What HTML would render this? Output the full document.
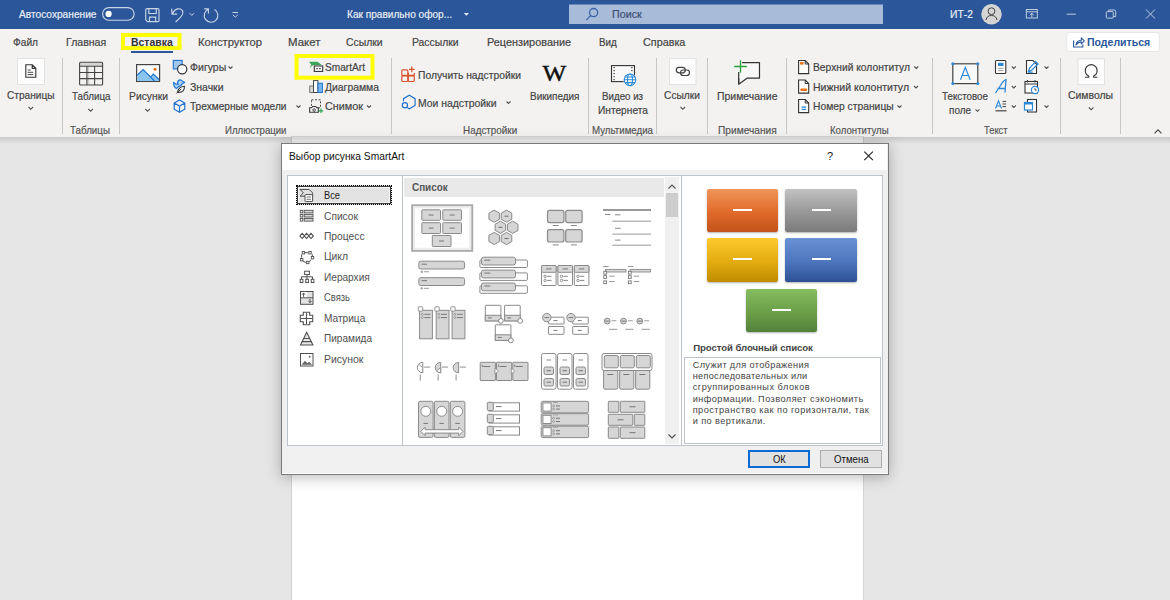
<!DOCTYPE html>
<html><head><meta charset="utf-8"><style>
html,body{margin:0;padding:0;width:1170px;height:600px;overflow:hidden;background:#e6e6e6;font-family:"Liberation Sans", sans-serif;}
.t{position:absolute;white-space:nowrap;line-height:1;transform-origin:0 0;}
.s{-webkit-text-stroke:0.2px currentColor;}
.a{position:absolute;}
svg{position:absolute;overflow:visible;}
</style></head><body>
<!-- title bar -->
<div class="a" style="left:0;top:0;width:1170px;height:29px;background:#2b579a"></div>
<!-- ribbon -->
<div class="a" style="left:0;top:29px;width:1170px;height:108px;background:#f3f2f1"></div>

<!-- page -->
<div class="a" style="left:292px;top:137px;width:571px;height:463px;background:#fff;box-shadow:0 0 0 1px #d4d4d4"></div>
<div class="a" style="left:0;top:137px;width:1170px;height:7px;background:linear-gradient(rgba(0,0,0,.13),rgba(0,0,0,0))"></div>
<!-- dialog -->
<div class="a" style="left:281px;top:143px;width:606px;height:330px;background:#f0f0f0;border:1px solid #7a7a7a;box-shadow:0 2px 14px rgba(0,0,0,.28),inset 0 -1px 0 #fff"></div>
<div class="a" style="left:282px;top:144px;width:605px;height:26px;background:#fff"></div>
<!-- left pane -->
<div class="a" style="left:287px;top:175px;width:114px;height:269px;background:#fff;border:1px solid #bcc3cc"></div>
<!-- gallery -->
<div class="a" style="left:403px;top:175px;width:278px;height:269px;background:#fff;border:1px solid #bcc3cc;border-left:none"></div>
<div class="a" style="left:404px;top:178px;width:260px;height:19px;background:#e9e9e9"></div>
<div class="a" style="left:665px;top:177px;width:14px;height:267px;background:#f0f0f0"></div>
<div class="a" style="left:666px;top:193px;width:12px;height:24px;background:#cdcdcd"></div>
<!-- preview pane -->
<div class="a" style="left:681px;top:175px;width:200px;height:269px;background:#fff;border:1px solid #bcc3cc"></div>
<div class="a" style="left:684px;top:357px;width:195px;height:85px;border:1px solid #bcc3cc"></div>
<!-- selected item -->
<div class="a" style="left:296px;top:185px;width:94px;height:18px;background:#e3e3e3;border:1px dotted #000;box-shadow:inset 0 0 0 1px #3a3a3a,inset 0 0 0 2px #f4f4f4"></div>
<!-- buttons -->
<div class="a" style="left:748px;top:450px;width:58px;height:14px;background:#e1e1e1;border:2px solid #0a6ad6"></div>
<div class="a" style="left:820px;top:450px;width:60px;height:16px;background:#e1e1e1;border:1px solid #adadad"></div>
<!-- preview boxes -->
<div class="a" style="left:707px;top:188.5px;width:71px;height:43px;border-radius:2px;background:linear-gradient(#f0955a,#e06a2a 55%,#c2531b);box-shadow:0 1px 2px rgba(0,0,0,.3)"></div>
<div class="a" style="left:785px;top:188.5px;width:72px;height:43px;border-radius:2px;background:linear-gradient(#c2c2c2,#979797 55%,#7b7b7b);box-shadow:0 1px 2px rgba(0,0,0,.3)"></div>
<div class="a" style="left:707px;top:238px;width:71px;height:44px;border-radius:2px;background:linear-gradient(#fdca2e,#e2ab10 55%,#bf8c00);box-shadow:0 1px 2px rgba(0,0,0,.3)"></div>
<div class="a" style="left:785px;top:238px;width:72px;height:44px;border-radius:2px;background:linear-gradient(#6a92d4,#4c75bd 55%,#2d5193);box-shadow:0 1px 2px rgba(0,0,0,.3)"></div>
<div class="a" style="left:746px;top:288.5px;width:71px;height:43px;border-radius:2px;background:linear-gradient(#86bd5f,#6b9e48 55%,#52813a);box-shadow:0 1px 2px rgba(0,0,0,.3)"></div>
<div class="a" style="left:733px;top:209px;width:19px;height:2px;background:#fff"></div>
<div class="a" style="left:812px;top:209px;width:19px;height:2px;background:#fff"></div>
<div class="a" style="left:733px;top:258px;width:19px;height:2px;background:#fff"></div>
<div class="a" style="left:812px;top:258px;width:19px;height:2px;background:#fff"></div>
<div class="a" style="left:772px;top:309px;width:19px;height:2px;background:#fff"></div>
<svg width="1170" height="600" style="left:0;top:0">
<g fill="none" stroke="#c9d4e6" stroke-width="1.15">
 <rect x="102.6" y="7.6" width="31.5" height="12.6" rx="6.3"/>
 <path d="M147.2 8.6h10.3q1.5 0 1.5 1.5v10.3q0 1.2-1.2 1.2h-10.3l-1.8-1.8v-9.7q0-1.5 1.5-1.5z M148.8 8.6v4.9h7.5v-4.9 M149.5 21.6v-4.5h6.2v4.5"/>
 <path d="M171.6 8.6l.5 5.5h5 M172.3 13.9C175 8 181 7.2 182.8 11.5C183.8 14 182 16.5 175.6 22"/>
 <path d="M189.6 13.2l2.2 2.2 2.2-2.2" stroke-width="1"/>
 <path d="M214.5 9.6A6.8 6.8 0 1 1 208.4 9.2 M204.3 8.8h4.1v4.6"/>
 <path d="M232.5 12.5h5.5 M232.8 14.8l2.5 2.3 2.5-2.3" stroke-width="1"/>
</g>
<circle cx="108.6" cy="13.9" r="3.1" fill="#fff"/>
<!-- search box -->
<rect x="569" y="4.5" width="314" height="19.5" fill="#a8bbd9"/>
<g fill="none" stroke="#3a64a6" stroke-width="1.3"><circle cx="593.6" cy="12.6" r="4.1"/><path d="M590.6 15.6l-4.3 4.5"/></g>
<!-- avatar -->
<circle cx="991.5" cy="14.2" r="10.2" fill="#d4d4d4"/>
<g fill="none" stroke="#444" stroke-width="1"><circle cx="991.5" cy="11.2" r="3.4"/><path d="M986 20a5.6 5.6 0 0 1 11 0"/></g>
<g fill="none" stroke="#c7d2e5" stroke-width="0.95">
 <rect x="1026.3" y="9.5" width="11" height="8.5"/><path d="M1026.3 11.8h11 M1031.8 17.8v-4.5 M1029.8 15.2l2-2 2 2"/>
 <path d="M1066.8 14.2h9"/>
 <rect x="1106.3" y="11.6" width="7" height="6.5" rx="1"/><path d="M1108.6 11.6v-1.6h5.5q1.6 0 1.6 1.6v5h-2.4"/>
 <path d="M1146 9.5l9 9 M1155 9.5l-9 9"/>
</g>
<!-- tab highlight -->
<rect x="123" y="35" width="56.5" height="13" fill="none" stroke="#ffff00" stroke-width="4"/>
<rect x="131" y="51" width="42" height="2" fill="#2b579a"/>
<!-- share button -->
<rect x="1066.8" y="32.5" width="92.5" height="19" rx="2" fill="#fff" stroke="#e6e6e6"/>
<g fill="none" stroke="#2b579a" stroke-width="1.1"><path d="M1073.6 40.5v6.5h9.2v-2.5"/><path d="M1076 45q0.5-4.5 5.3-4.8v-2.3l3 3-3 3v-2q-3 0-5.3 3z" stroke-linejoin="round"/></g>
<path d="M463.8 13l2.6 2.8 2.6-2.8z" fill="#e3e9f3"/>
<!-- separators -->
<g fill="#c8c6c4"><rect x="62" y="58" width="1" height="76"/><rect x="119" y="58" width="1" height="76"/><rect x="391" y="58" width="1" height="76"/><rect x="588" y="58" width="1" height="76"/><rect x="656" y="58" width="1" height="76"/><rect x="707" y="58" width="1" height="76"/><rect x="786" y="58" width="1" height="76"/><rect x="932" y="58" width="1" height="76"/><rect x="1060" y="58" width="1" height="76"/><rect x="1120" y="58" width="1" height="76"/></g>
<!-- Страницы -->
<rect x="17.5" y="58.5" width="27" height="26" fill="#fdfdfd" stroke="#e2e2e2"/>
<g fill="none" stroke="#333" stroke-width="1.1"><path d="M25.8 64.8h6.5l3.5 3.5v9h-10z M32.2 64.8v3.6h3.6"/><path d="M27.7 70h3 M27.7 72.3h5.5 M27.7 74.6h5.5" stroke-width="0.9"/></g>
<!-- Таблица -->
<rect x="80.2" y="62.9" width="21.8" height="3" fill="#d6d6d6"/><rect x="87.6" y="66.2" width="1.6" height="18.3" fill="#d0d0d0"/>
<g fill="none" stroke="#444" stroke-width="1.1"><rect x="79.6" y="62.3" width="23" height="22.7" rx="1"/><path d="M79.6 66.3h23 M79.6 72.5h23 M79.6 78.6h23 M86.9 66.3v18.7 M94.6 66.3v18.7"/></g>
<!-- Рисунки -->
<rect x="136.6" y="64.6" width="23" height="16.8" fill="#fdfdfd" stroke="#444" stroke-width="1.2"/>
<path d="M137.2 75.2L143.1 69.6 155 81H137.2z" fill="#8cc4f0"/>
<path d="M150.6 77L153.4 74 159 79.6V81H154.8z" fill="#8cc4f0"/>
<path d="M137.2 75.2L143.1 69.6 154.6 81 M150.6 76.9L153.4 74 159 79.5" fill="none" stroke="#1f78d1" stroke-width="1.2"/>
<circle cx="155" cy="69.2" r="1.5" fill="#e8731a"/>
<!-- Фигуры -->
<rect x="173.3" y="60.4" width="8.8" height="8.5" fill="#9fc7f0" stroke="#1f73d0" stroke-width="1.1"/>
<circle cx="182.2" cy="69.3" r="4.6" fill="#fff" stroke="#333" stroke-width="1.2"/>
<!-- Значки -->
<path d="M173.6 82.4Q173.8 87.6 176.6 88.4L178.6 86.6Q181.5 85.6 182 84L184.7 82.3 182.4 81.3Q181.2 79.2 179.1 80Q177 80.9 178 84.3Q175.6 84.6 173.6 82.4z" fill="#a6d2f5" stroke="#1f73d0" stroke-width="1.2" stroke-linejoin="round"/>
<path d="M177.6 92.2Q178.2 87 184.4 86.3Q184.7 92.4 178.6 92.4z" fill="#fff" stroke="#333" stroke-width="1.1"/>
<path d="M176.4 93.3L181.2 89" stroke="#333" stroke-width="1"/>
<!-- 3D -->
<g fill="none" stroke="#1f73d0" stroke-width="1.2"><path d="M179.5 100l5.3 3v6.2l-5.3 3-5.3-3v-6.2z M174.2 103l5.3 3 5.3-3 M179.5 106v6.2"/></g>
<!-- SmartArt yellow -->
<rect x="296.5" y="56" width="76" height="21.7" fill="none" stroke="#ffff00" stroke-width="4"/>
<path d="M309 61.8h8.5l4.3 3.3h-8.5l-4.3 3.3 2.5-3.3z" fill="#3aa65a"/>
<rect x="314.3" y="66" width="8.4" height="5.4" fill="#fff" stroke="#333" stroke-width="1.1"/><path d="M316.2 68.7h1.8 M319 68.7h1.8" stroke="#333" stroke-width="1"/>
<!-- Диаграмма -->
<rect x="309.8" y="86" width="3.6" height="6.5" fill="#ddd" stroke="#666" stroke-width=".9"/>
<rect x="313.5" y="80.6" width="4.4" height="11.9" fill="#fff" stroke="#444" stroke-width="1"/>
<rect x="318" y="83.2" width="4.4" height="9.3" fill="#78b5ea" stroke="#1f73d0" stroke-width="1"/>
<!-- Снимок -->
<rect x="311.5" y="99.8" width="9" height="8" fill="none" stroke="#555" stroke-width="1" stroke-dasharray="2 1.5"/>
<path d="M309.7 107.8h2l1-1.3h3l1 1.3h1.6v4.5h-8.6z" fill="#fff" stroke="#333" stroke-width="1.1"/><circle cx="314.1" cy="110" r="1.3" fill="none" stroke="#333" stroke-width=".9"/>
<path d="M321 108.6v4.4 M318.8 110.8h4.4" stroke="#2ea44f" stroke-width="1.2"/>
<!-- Получить надстройки -->
<g fill="none" stroke="#d9512c" stroke-width="1.2">
<rect x="401.8" y="69.8" width="6" height="5.6" rx="1"/><rect x="401.8" y="75.9" width="6" height="5.6" rx="1"/><rect x="408.3" y="75.9" width="6" height="5.6" rx="1"/>
<path d="M408.3 72.5v2.9h6v-2.3 M411.8 66.6v5.6 M409 69.4h5.6"/>
</g>
<!-- Мои надстройки -->
<g fill="none" stroke="#1f73d0" stroke-width="1.2">
<path d="M403.5 101.3v-2.6l5.8-3.4 5.8 3.4v6.7l-5.8 3.4-2.2-1.3"/>
<circle cx="404.9" cy="105.2" r="2.6"/>
</g>
<!-- W -->
<text x="542.6" y="81.2" font-family="Liberation Serif" font-size="22.5" fill="#111" stroke="#111" stroke-width="0.45" transform="translate(542.6 0) scale(1.12 1) translate(-542.6 0)">W</text>
<!-- video -->
<rect x="611.5" y="65.6" width="23" height="16" fill="#f8f8f8" stroke="#333" stroke-width="1.1"/>
<g fill="#333"><rect x="613.5" y="67" width="1.2" height="1.2"/><rect x="613.5" y="70" width="1.2" height="1.2"/><rect x="613.5" y="73" width="1.2" height="1.2"/><rect x="613.5" y="76" width="1.2" height="1.2"/><rect x="613.5" y="79" width="1.2" height="1.2"/><rect x="631.3" y="67" width="1.2" height="1.2"/><rect x="631.3" y="70" width="1.2" height="1.2"/></g>
<circle cx="630" cy="79.8" r="6.6" fill="#fff"/>
<g fill="none" stroke="#2b88d8" stroke-width="1.1"><circle cx="630" cy="79.8" r="5.8"/><ellipse cx="630" cy="79.8" rx="2.5" ry="5.8"/><path d="M624.2 79.8h11.6 M625 77h10 M625 82.6h10"/></g>
<!-- Ссылки -->
<rect x="669.5" y="58.6" width="26.5" height="26" fill="#fdfdfd" stroke="#e2e2e2"/>
<g fill="none" stroke="#444" stroke-width="1.2"><rect x="676.3" y="67.3" width="9" height="5.5" rx="2.75"/><rect x="680.5" y="70" width="9" height="5.5" rx="2.75"/></g>
<!-- Примечание -->
<path d="M738.7 62.7h20.8v15.5h-12.5l-8.3 6z" fill="#f8f8f8" stroke="#333" stroke-width="1.2" stroke-linejoin="round"/>
<path d="M738.7 78.2v6" stroke="#333" stroke-width="1.2"/>
<rect x="732" y="60" width="10" height="12" fill="#f3f2f1"/>
<path d="M740.5 60.2v12.6 M734.2 66.5h12.6" stroke="#25a244" stroke-width="1.3"/>
<!-- колонтитулы -->
<g fill="#fff" stroke="#333" stroke-width="1.1"><path d="M798.6 60.5h6.6l3.5 3.5v9.6h-10.1z"/><path d="M798.6 80h6.6l3.5 3.5v9.6h-10.1z"/><path d="M798.6 99.5h6.6l3.5 3.5v9.6h-10.1z"/></g>
<g fill="none" stroke="#333" stroke-width="1"><path d="M805.2 60.5v3.5h3.5 M805.2 80v3.5h3.5 M805.2 99.5v3.5h3.5"/></g>
<rect x="800" y="62" width="3.6" height="2.6" fill="#e8731a"/>
<rect x="800.3" y="88.5" width="6.8" height="2.4" rx="1" fill="#e8731a"/>
<rect x="801.6" y="106.5" width="4.5" height="1.3" fill="#2b88d8"/><rect x="801.6" y="108.8" width="4.5" height="1.3" fill="#2b88d8"/>
<!-- Textbox -->
<rect x="952.8" y="63.8" width="25" height="19.8" fill="#f8f8f8" stroke="#444" stroke-width="1.2"/>
<g fill="#2b88d8"><circle cx="952.8" cy="63.8" r="1.5"/><circle cx="977.8" cy="63.8" r="1.5"/><circle cx="952.8" cy="83.6" r="1.5"/><circle cx="977.8" cy="83.6" r="1.5"/></g>
<path d="M960.5 79.8l4.8-12.5 4.8 12.5 M962.2 75.5h6.2" fill="none" stroke="#2b88d8" stroke-width="1.2"/>
<!-- col1 small icons -->
<rect x="995.5" y="60.5" width="10.3" height="13" rx="1" fill="#fff" stroke="#333" stroke-width="1.1"/>
<rect x="998" y="62.8" width="5.5" height="3.2" fill="#2b88d8"/><path d="M998 68.3h5.5 M998 70.6h5.5" stroke="#999" stroke-width="1"/>
<path d="M995.5 93l5-7.5q2.8-5 5.5-5.8l-1 12.8 M997.5 88.5h8" fill="none" stroke="#2b88d8" stroke-width="1.3"/>
<path d="M995.5 108.5l3-7.8 3 7.8 M996.6 106h3.8" fill="none" stroke="#2b88d8" stroke-width="1.1"/><path d="M1002.5 101.4h3.6 M1002.5 104h3.6 M1002.5 106.6h3.6" stroke="#444" stroke-width="1"/><path d="M995.5 110.8h11" stroke="#444" stroke-width="1.2"/>
<!-- col2 small icons -->
<path d="M1026.5 60.5h6.5l3.5 3.5v9.5h-10z" fill="#fff" stroke="#333" stroke-width="1.1"/>
<path d="M1028.5 71.2l1-3.2 6.3-6.3 2.2 2.2-6.3 6.3z M1027.8 72.2h5" fill="none" stroke="#2b88d8" stroke-width="1.2"/>
<rect x="1025" y="81.5" width="12.5" height="11.5" fill="#fff" stroke="#333" stroke-width="1.1"/><path d="M1025 84h12.5 M1027.5 80v2.5 M1035 80v2.5" stroke="#333" stroke-width="1"/>
<circle cx="1035" cy="90" r="3.6" fill="#fff" stroke="#2b88d8" stroke-width="1.2"/><path d="M1035 88.2v1.9h1.6" stroke="#333" stroke-width=".9" fill="none"/>
<rect x="1027.5" y="99.5" width="9" height="12.5" fill="#fff" stroke="#333" stroke-width="1.1"/>
<rect x="1024.5" y="102.5" width="8" height="7.5" fill="#fff" stroke="#2b88d8" stroke-width="1.2"/><rect x="1024.5" y="102.5" width="8" height="2" fill="#2b88d8"/>
<!-- Символы -->
<rect x="1078" y="58.8" width="26.5" height="25.8" fill="#fdfdfd" stroke="#e2e2e2"/>
<path d="M1085 77.2h3.7v-1.1A6 6 0 1 1 1093.7 76.1v1.1h3.7" fill="none" stroke="#333" stroke-width="1.1"/>
<!-- chevrons -->
<g fill="none" stroke="#555" stroke-width="1.1">
 <path d="M28.5 107l2.3 2.3 2.3-2.3 M88.3 109l2.3 2.3 2.3-2.3 M145.3 109l2.3 2.3 2.3-2.3 M680.5 107l2.3 2.3 2.3-2.3 M1088.8 107.5l2.3 2.3 2.3-2.3"/>
 <path d="M228.5 66.5l2 2 2-2 M296.5 105.5l2 2 2-2 M367 105.5l2 2 2-2 M506.5 101.5l2 2 2-2 M914.3 66.5l2 2 2-2 M914 86l2 2 2-2 M897.5 105.5l2 2 2-2 M975.5 109.3l2 2 2-2 M1011.8 66.5l2 2 2-2 M1011.8 86l2 2 2-2 M1011.8 105.5l2 2 2-2 M1044.5 66.5l2 2 2-2 M1044.5 105.5l2 2 2-2"/>
 <path d="M1154.5 133.3l3.5-3.5 3.5 3.5" stroke="#444"/>
</g>
</svg>
<svg width="1170" height="600" style="left:0;top:0"><rect x="412.2" y="205.3" width="60" height="45.5" rx="0" fill="#fff" stroke="#a9a9a9" stroke-width="2"/><rect x="414.2" y="207.3" width="56" height="41.5" rx="0" fill="none" stroke="#ececec" stroke-width="2"/><rect x="421.8" y="209.8" width="18.7" height="10.5" rx="0.8" fill="#d6d6d6" stroke="#8a8a8a" stroke-width="1"/><path d="M428.6 215.05h5" stroke="#777" stroke-width="1"/><rect x="442.8" y="209.8" width="18.7" height="10.5" rx="0.8" fill="#d6d6d6" stroke="#8a8a8a" stroke-width="1"/><path d="M449.6 215.05h5" stroke="#777" stroke-width="1"/><rect x="421.8" y="222.7" width="18.7" height="10.8" rx="0.8" fill="#d6d6d6" stroke="#8a8a8a" stroke-width="1"/><path d="M428.6 228.1h5" stroke="#777" stroke-width="1"/><rect x="442.8" y="222.7" width="18.7" height="10.8" rx="0.8" fill="#d6d6d6" stroke="#8a8a8a" stroke-width="1"/><path d="M449.6 228.1h5" stroke="#777" stroke-width="1"/><rect x="432.3" y="235.5" width="18.7" height="11" rx="0.8" fill="#d6d6d6" stroke="#8a8a8a" stroke-width="1"/><path d="M439.1 241.0h5" stroke="#777" stroke-width="1"/><polygon points="494.20,210.10 499.48,213.15 499.48,219.25 494.20,222.30 488.92,219.25 488.92,213.15" fill="#d6d6d6" stroke="#8a8a8a" stroke-width="1"/><polygon points="506.50,210.10 511.78,213.15 511.78,219.25 506.50,222.30 501.22,219.25 501.22,213.15" fill="#d6d6d6" stroke="#8a8a8a" stroke-width="1"/><path d="M504.5 216.2h4" stroke="#6f6f6f" stroke-width="1"/><polygon points="500.40,221.20 505.68,224.25 505.68,230.35 500.40,233.40 495.12,230.35 495.12,224.25" fill="#d6d6d6" stroke="#8a8a8a" stroke-width="1"/><path d="M498.4 227.3h4" stroke="#6f6f6f" stroke-width="1"/><polygon points="512.70,221.20 517.98,224.25 517.98,230.35 512.70,233.40 507.42,230.35 507.42,224.25" fill="#d6d6d6" stroke="#8a8a8a" stroke-width="1"/><polygon points="494.20,232.40 499.48,235.45 499.48,241.55 494.20,244.60 488.92,241.55 488.92,235.45" fill="#d6d6d6" stroke="#8a8a8a" stroke-width="1"/><polygon points="506.50,232.40 511.78,235.45 511.78,241.55 506.50,244.60 501.22,241.55 501.22,235.45" fill="#d6d6d6" stroke="#8a8a8a" stroke-width="1"/><path d="M504.5 238.5h4" stroke="#6f6f6f" stroke-width="1"/><rect x="547.5" y="210.3" width="16.4" height="12.3" rx="2" fill="#d6d6d6" stroke="#8a8a8a" stroke-width="1.2"/><path d="M552.7 225.5h6" stroke="#888" stroke-width="1"/><rect x="565.7" y="210.3" width="16.4" height="12.3" rx="2" fill="#d6d6d6" stroke="#8a8a8a" stroke-width="1.2"/><path d="M570.9000000000001 225.5h6" stroke="#888" stroke-width="1"/><rect x="547.5" y="229.7" width="16.4" height="12.3" rx="2" fill="#d6d6d6" stroke="#8a8a8a" stroke-width="1.2"/><path d="M552.7 244.89999999999998h6" stroke="#888" stroke-width="1"/><rect x="565.7" y="229.7" width="16.4" height="12.3" rx="2" fill="#d6d6d6" stroke="#8a8a8a" stroke-width="1.2"/><path d="M570.9000000000001 244.89999999999998h6" stroke="#888" stroke-width="1"/><path d="M603 210h48" fill="none" stroke="#777" stroke-width="1.3"/><path d="M612.3 221.2h38.7" fill="none" stroke="#999" stroke-width="1"/><path d="M612.3 234.1h38.7" fill="none" stroke="#999" stroke-width="1"/><path d="M612.3 245.2h38.7" fill="none" stroke="#999" stroke-width="1"/><path d="M605 214.5h5.5" stroke="#888" stroke-width="1"/><path d="M615 214.8h5.5" stroke="#888" stroke-width="1"/><path d="M615 228.3h5.5" stroke="#888" stroke-width="1"/><path d="M615 240.1h5.5" stroke="#888" stroke-width="1"/><rect x="418.8" y="261.2" width="45.8" height="7.8" rx="2" fill="#d6d6d6" stroke="#8a8a8a" stroke-width="1"/><path d="M421.5 264.2h5.5" stroke="#777" stroke-width="1"/><circle cx="421.8" cy="271.8" r="0.9" fill="#999" stroke="#999" stroke-width="0.6"/><path d="M424 271.8h5" stroke="#999" stroke-width="1"/><rect x="418.8" y="277.7" width="45.8" height="7.8" rx="2" fill="#d6d6d6" stroke="#8a8a8a" stroke-width="1"/><path d="M421.5 280.7h5.5" stroke="#777" stroke-width="1"/><circle cx="421.8" cy="288.3" r="0.9" fill="#999" stroke="#999" stroke-width="0.6"/><path d="M424 288.3h5" stroke="#999" stroke-width="1"/><rect x="479.9" y="260.0" width="47.5" height="7.5" rx="1" fill="#fff" stroke="#8a8a8a" stroke-width="1"/><rect x="481.5" y="257.2" width="34" height="7.8" rx="2" fill="#d6d6d6" stroke="#8a8a8a" stroke-width="1"/><path d="M484.3 260.2h6" stroke="#777" stroke-width="1"/><rect x="479.9" y="272.9" width="47.5" height="7.5" rx="1" fill="#fff" stroke="#8a8a8a" stroke-width="1"/><rect x="481.5" y="270.09999999999997" width="34" height="7.8" rx="2" fill="#d6d6d6" stroke="#8a8a8a" stroke-width="1"/><path d="M484.3 273.09999999999997h6" stroke="#777" stroke-width="1"/><rect x="479.9" y="285.8" width="47.5" height="7.5" rx="1" fill="#fff" stroke="#8a8a8a" stroke-width="1"/><rect x="481.5" y="283.0" width="34" height="7.8" rx="2" fill="#d6d6d6" stroke="#8a8a8a" stroke-width="1"/><path d="M484.3 286.0h6" stroke="#777" stroke-width="1"/><rect x="541.5" y="265.5" width="14.6" height="20" rx="1" fill="#fff" stroke="#8a8a8a" stroke-width="1"/><rect x="541.5" y="265.5" width="14.6" height="6.8" rx="1" fill="#d6d6d6" stroke="#8a8a8a" stroke-width="1"/><path d="M546.0 268.9h5.5" stroke="#777" stroke-width="1"/><circle cx="545.1" cy="276.3" r="1.2" fill="#fff" stroke="#777" stroke-width="0.8"/><path d="M547.0 276.3h4.5" stroke="#888" stroke-width="1"/><circle cx="545.1" cy="280.4" r="1.2" fill="#fff" stroke="#777" stroke-width="0.8"/><path d="M547.0 280.4h4.5" stroke="#888" stroke-width="1"/><rect x="557.9" y="265.5" width="14.6" height="20" rx="1" fill="#fff" stroke="#8a8a8a" stroke-width="1"/><rect x="557.9" y="265.5" width="14.6" height="6.8" rx="1" fill="#d6d6d6" stroke="#8a8a8a" stroke-width="1"/><path d="M562.4 268.9h5.5" stroke="#777" stroke-width="1"/><circle cx="561.5" cy="276.3" r="1.2" fill="#fff" stroke="#777" stroke-width="0.8"/><path d="M563.4 276.3h4.5" stroke="#888" stroke-width="1"/><circle cx="561.5" cy="280.4" r="1.2" fill="#fff" stroke="#777" stroke-width="0.8"/><path d="M563.4 280.4h4.5" stroke="#888" stroke-width="1"/><rect x="574.3" y="265.5" width="14.6" height="20" rx="1" fill="#fff" stroke="#8a8a8a" stroke-width="1"/><rect x="574.3" y="265.5" width="14.6" height="6.8" rx="1" fill="#d6d6d6" stroke="#8a8a8a" stroke-width="1"/><path d="M578.8 268.9h5.5" stroke="#777" stroke-width="1"/><circle cx="577.9" cy="276.3" r="1.2" fill="#fff" stroke="#777" stroke-width="0.8"/><path d="M579.8 276.3h4.5" stroke="#888" stroke-width="1"/><circle cx="577.9" cy="280.4" r="1.2" fill="#fff" stroke="#777" stroke-width="0.8"/><path d="M579.8 280.4h4.5" stroke="#888" stroke-width="1"/><path d="M603.3 266.5h5.3" stroke="#999" stroke-width="1"/><rect x="605.5" y="269.4" width="20.4" height="2.6" rx="0" fill="#d6d6d6" stroke="#8a8a8a" stroke-width="0.9"/><rect x="603.8" y="271.3" width="2.8" height="2.8" rx="0" fill="#fff" stroke="#777" stroke-width="0.9"/><rect x="603.8" y="275.6" width="2.8" height="2.8" rx="0" fill="#fff" stroke="#777" stroke-width="0.9"/><path d="M609.0999999999999 276.2h5.5" stroke="#999" stroke-width="1"/><rect x="603.8" y="280.90000000000003" width="2.8" height="2.8" rx="0" fill="#fff" stroke="#777" stroke-width="0.9"/><path d="M609.0999999999999 281.5h5.5" stroke="#999" stroke-width="1"/><path d="M627.9 266.5h5.3" stroke="#999" stroke-width="1"/><rect x="630.1" y="269.4" width="20.4" height="2.6" rx="0" fill="#d6d6d6" stroke="#8a8a8a" stroke-width="0.9"/><rect x="628.4" y="271.3" width="2.8" height="2.8" rx="0" fill="#fff" stroke="#777" stroke-width="0.9"/><rect x="628.4" y="275.6" width="2.8" height="2.8" rx="0" fill="#fff" stroke="#777" stroke-width="0.9"/><path d="M633.6999999999999 276.2h5.5" stroke="#999" stroke-width="1"/><rect x="628.4" y="280.90000000000003" width="2.8" height="2.8" rx="0" fill="#fff" stroke="#777" stroke-width="0.9"/><path d="M633.6999999999999 281.5h5.5" stroke="#999" stroke-width="1"/><rect x="419.6" y="310.3" width="12.8" height="28.5" rx="0" fill="#d6d6d6" stroke="#8a8a8a" stroke-width="1"/><rect x="418.3" y="306.8" width="4.3" height="4.3" rx="0.5" fill="#fff" stroke="#8a8a8a" stroke-width="0.9"/><circle cx="422.3" cy="314.3" r="0.9" fill="#fff" stroke="#777" stroke-width="0.7"/><path d="M424.40000000000003 314.3h6" stroke="#777" stroke-width="1"/><circle cx="422.3" cy="317.6" r="0.9" fill="#fff" stroke="#777" stroke-width="0.7"/><path d="M424.40000000000003 317.6h6" stroke="#777" stroke-width="1"/><rect x="436.2" y="310.3" width="12.8" height="28.5" rx="0" fill="#d6d6d6" stroke="#8a8a8a" stroke-width="1"/><rect x="434.9" y="306.8" width="4.3" height="4.3" rx="0.5" fill="#fff" stroke="#8a8a8a" stroke-width="0.9"/><circle cx="438.9" cy="314.3" r="0.9" fill="#fff" stroke="#777" stroke-width="0.7"/><path d="M441.0 314.3h6" stroke="#777" stroke-width="1"/><circle cx="438.9" cy="317.6" r="0.9" fill="#fff" stroke="#777" stroke-width="0.7"/><path d="M441.0 317.6h6" stroke="#777" stroke-width="1"/><rect x="452.1" y="310.3" width="12.8" height="28.5" rx="0" fill="#d6d6d6" stroke="#8a8a8a" stroke-width="1"/><rect x="450.8" y="306.8" width="4.3" height="4.3" rx="0.5" fill="#fff" stroke="#8a8a8a" stroke-width="0.9"/><circle cx="454.8" cy="314.3" r="0.9" fill="#fff" stroke="#777" stroke-width="0.7"/><path d="M456.90000000000003 314.3h6" stroke="#777" stroke-width="1"/><circle cx="454.8" cy="317.6" r="0.9" fill="#fff" stroke="#777" stroke-width="0.7"/><path d="M456.90000000000003 317.6h6" stroke="#777" stroke-width="1"/><rect x="485.3" y="305.3" width="15.6" height="15.6" rx="0.5" fill="#fff" stroke="#8a8a8a" stroke-width="1"/><rect x="485.3" y="315.3" width="15.6" height="5.6" rx="0" fill="#d6d6d6" stroke="#8a8a8a" stroke-width="1"/><path d="M487.8 317.90000000000003h4" stroke="#777" stroke-width="1"/><circle cx="500.90000000000003" cy="320.90000000000003" r="2.4" fill="#fff" stroke="#8a8a8a" stroke-width="1"/><rect x="504.6" y="305.3" width="15.6" height="15.6" rx="0.5" fill="#fff" stroke="#8a8a8a" stroke-width="1"/><rect x="504.6" y="315.3" width="15.6" height="5.6" rx="0" fill="#d6d6d6" stroke="#8a8a8a" stroke-width="1"/><path d="M507.1 317.90000000000003h4" stroke="#777" stroke-width="1"/><circle cx="520.2" cy="320.90000000000003" r="2.4" fill="#fff" stroke="#8a8a8a" stroke-width="1"/><rect x="495.3" y="324.8" width="15.6" height="15.6" rx="0.5" fill="#fff" stroke="#8a8a8a" stroke-width="1"/><rect x="495.3" y="334.8" width="15.6" height="5.6" rx="0" fill="#d6d6d6" stroke="#8a8a8a" stroke-width="1"/><path d="M497.8 337.40000000000003h4" stroke="#777" stroke-width="1"/><circle cx="510.90000000000003" cy="340.40000000000003" r="2.4" fill="#fff" stroke="#8a8a8a" stroke-width="1"/><rect x="548.5" y="317.2" width="15.5" height="6.8" rx="0.5" fill="#fff" stroke="#8a8a8a" stroke-width="1"/><path d="M553.5 320.6h4" stroke="#777" stroke-width="1"/><rect x="548.5" y="326.5" width="15.5" height="7.8" rx="0.5" fill="#fff" stroke="#8a8a8a" stroke-width="1"/><path d="M553.5 330.4h4" stroke="#777" stroke-width="1"/><circle cx="546.8" cy="317.6" r="4.2" fill="#d6d6d6" stroke="#8a8a8a" stroke-width="1"/><path d="M544.5 317.6h4.5" stroke="#777" stroke-width="1"/><rect x="572.7" y="317.2" width="15.5" height="6.8" rx="0.5" fill="#fff" stroke="#8a8a8a" stroke-width="1"/><path d="M577.7 320.6h4" stroke="#777" stroke-width="1"/><rect x="572.7" y="326.5" width="15.5" height="7.8" rx="0.5" fill="#fff" stroke="#8a8a8a" stroke-width="1"/><path d="M577.7 330.4h4" stroke="#777" stroke-width="1"/><circle cx="571.0" cy="317.6" r="4.2" fill="#d6d6d6" stroke="#8a8a8a" stroke-width="1"/><path d="M568.7 317.6h4.5" stroke="#777" stroke-width="1"/><circle cx="607.2" cy="321.1" r="2.9" fill="#d6d6d6" stroke="#8a8a8a" stroke-width="1"/><path d="M605.2 321.1h4" stroke="#777" stroke-width="1"/><path d="M611.5 320.8h5" stroke="#999" stroke-width="1"/><path d="M609.0 329.3h8.3" stroke="#999" stroke-width="1"/><circle cx="623.5" cy="321.1" r="2.9" fill="#d6d6d6" stroke="#8a8a8a" stroke-width="1"/><path d="M621.5 321.1h4" stroke="#777" stroke-width="1"/><path d="M627.8 320.8h5" stroke="#999" stroke-width="1"/><path d="M625.3 329.3h8.3" stroke="#999" stroke-width="1"/><circle cx="639.8000000000001" cy="321.1" r="2.9" fill="#d6d6d6" stroke="#8a8a8a" stroke-width="1"/><path d="M637.8000000000001 321.1h4" stroke="#777" stroke-width="1"/><path d="M644.1 320.8h5" stroke="#999" stroke-width="1"/><path d="M641.6 329.3h8.3" stroke="#999" stroke-width="1"/><path d="M422.8 362.4A5.5 5.2 0 0 0 422.8 372.8z" fill="#fff" stroke="#8a8a8a" stroke-width="1"/><path d="M422.8 367.6L418.90000000000003 364.5" fill="none" stroke="#8a8a8a" stroke-width="0.9"/><path d="M424.1 367.1h6" stroke="#999" stroke-width="1.1"/><path d="M420.3 374.4v6.2" fill="none" stroke="#999" stroke-width="1.1"/><path d="M440.7 362.4A5.5 5.2 0 0 0 440.7 372.8z" fill="#d6d6d6" stroke="#8a8a8a" stroke-width="1"/><path d="M440.7 367.6L436.5 370.8A5.5 5.2 0 0 0 440.7 372.8z" fill="#fff" stroke="#8a8a8a" stroke-width="0.9"/><path d="M442.0 367.1h6" stroke="#999" stroke-width="1.1"/><path d="M438.2 374.4v6.2" fill="none" stroke="#999" stroke-width="1.1"/><path d="M458.6 362.4A5.5 5.2 0 0 0 458.6 372.8z" fill="#d6d6d6" stroke="#8a8a8a" stroke-width="1"/><path d="M459.90000000000003 367.1h6" stroke="#999" stroke-width="1.1"/><path d="M456.1 374.4v6.2" fill="none" stroke="#999" stroke-width="1.1"/><rect x="480.2" y="362.3" width="15.2" height="18.2" rx="0.5" fill="#d6d6d6" stroke="#8a8a8a" stroke-width="1"/><path d="M482.2 364.5v2.5" fill="none" stroke="#777" stroke-width="0.8"/><path d="M483.2 366.5h7" stroke="#777" stroke-width="1"/><rect x="496.5" y="362.3" width="15.2" height="18.2" rx="0.5" fill="#d6d6d6" stroke="#8a8a8a" stroke-width="1"/><path d="M498.5 364.5v2.5" fill="none" stroke="#777" stroke-width="0.8"/><path d="M499.5 366.5h7" stroke="#777" stroke-width="1"/><rect x="512.8" y="362.3" width="15.2" height="18.2" rx="0.5" fill="#d6d6d6" stroke="#8a8a8a" stroke-width="1"/><path d="M514.8 364.5v2.5" fill="none" stroke="#777" stroke-width="0.8"/><path d="M515.8 366.5h7" stroke="#777" stroke-width="1"/><path d="M495.0 368l3.5 3-3.5 3z" fill="#fff" stroke="#8a8a8a" stroke-width="0.8"/><path d="M511.29999999999995 368l3.5 3-3.5 3z" fill="#fff" stroke="#8a8a8a" stroke-width="0.8"/><rect x="541.5" y="353.5" width="14.5" height="35.7" rx="2" fill="#fff" stroke="#8a8a8a" stroke-width="1"/><path d="M546.5 360h4.5" stroke="#888" stroke-width="1"/><rect x="544.0" y="367" width="9.5" height="7.5" rx="1.5" fill="#d6d6d6" stroke="#8a8a8a" stroke-width="1"/><path d="M546.5 370.7h4.5" stroke="#777" stroke-width="1"/><rect x="544.0" y="378.5" width="9.5" height="7.5" rx="1.5" fill="#d6d6d6" stroke="#8a8a8a" stroke-width="1"/><path d="M546.5 382.2h4.5" stroke="#777" stroke-width="1"/><rect x="557.5" y="353.5" width="14.5" height="35.7" rx="2" fill="#fff" stroke="#8a8a8a" stroke-width="1"/><path d="M562.5 360h4.5" stroke="#888" stroke-width="1"/><rect x="560.0" y="367" width="9.5" height="7.5" rx="1.5" fill="#d6d6d6" stroke="#8a8a8a" stroke-width="1"/><path d="M562.5 370.7h4.5" stroke="#777" stroke-width="1"/><rect x="560.0" y="378.5" width="9.5" height="7.5" rx="1.5" fill="#d6d6d6" stroke="#8a8a8a" stroke-width="1"/><path d="M562.5 382.2h4.5" stroke="#777" stroke-width="1"/><rect x="573.5" y="353.5" width="14.5" height="35.7" rx="2" fill="#fff" stroke="#8a8a8a" stroke-width="1"/><path d="M578.5 360h4.5" stroke="#888" stroke-width="1"/><rect x="576.0" y="367" width="9.5" height="7.5" rx="1.5" fill="#d6d6d6" stroke="#8a8a8a" stroke-width="1"/><path d="M578.5 370.7h4.5" stroke="#777" stroke-width="1"/><rect x="576.0" y="378.5" width="9.5" height="7.5" rx="1.5" fill="#d6d6d6" stroke="#8a8a8a" stroke-width="1"/><path d="M578.5 382.2h4.5" stroke="#777" stroke-width="1"/><rect x="603.5999999999999" y="370.5" width="14.2" height="18.7" rx="1.5" fill="#d6d6d6" stroke="#8a8a8a" stroke-width="1"/><path d="M607.3 374.5h6" stroke="#777" stroke-width="1"/><rect x="619.5999999999999" y="370.5" width="14.2" height="18.7" rx="1.5" fill="#d6d6d6" stroke="#8a8a8a" stroke-width="1"/><path d="M623.3 374.5h6" stroke="#777" stroke-width="1"/><rect x="635.5999999999999" y="370.5" width="14.2" height="18.7" rx="1.5" fill="#d6d6d6" stroke="#8a8a8a" stroke-width="1"/><path d="M639.3 374.5h6" stroke="#777" stroke-width="1"/><rect x="602" y="353.5" width="50" height="17" rx="2" fill="#fff" stroke="#8a8a8a" stroke-width="1"/><rect x="604.3" y="355.5" width="14" height="12.3" rx="1.5" fill="#d6d6d6" stroke="#8a8a8a" stroke-width="1"/><rect x="620.3" y="355.5" width="14" height="12.3" rx="1.5" fill="#d6d6d6" stroke="#8a8a8a" stroke-width="1"/><rect x="636.3" y="355.5" width="14" height="12.3" rx="1.5" fill="#d6d6d6" stroke="#8a8a8a" stroke-width="1"/><rect x="418.5" y="401.3" width="14.6" height="36.1" rx="1.5" fill="#d6d6d6" stroke="#8a8a8a" stroke-width="1"/><circle cx="425.8" cy="411.3" r="5" fill="#fff" stroke="#8a8a8a" stroke-width="1"/><path d="M423.5 423.4h4.5" stroke="#777" stroke-width="1"/><rect x="434.4" y="401.3" width="14.6" height="36.1" rx="1.5" fill="#d6d6d6" stroke="#8a8a8a" stroke-width="1"/><circle cx="441.7" cy="411.3" r="5" fill="#fff" stroke="#8a8a8a" stroke-width="1"/><path d="M439.4 423.4h4.5" stroke="#777" stroke-width="1"/><rect x="450.3" y="401.3" width="14.6" height="36.1" rx="1.5" fill="#d6d6d6" stroke="#8a8a8a" stroke-width="1"/><circle cx="457.6" cy="411.3" r="5" fill="#fff" stroke="#8a8a8a" stroke-width="1"/><path d="M455.3 423.4h4.5" stroke="#777" stroke-width="1"/><path d="M420.8 431.4l4.3-4.3v2.6h33.6v-2.6l4.3 4.3-4.3 4.3v-2.6h-33.6v2.6z" fill="#fff" stroke="#8a8a8a" stroke-width="1"/><rect x="489" y="402.8" width="30.5" height="8.3" rx="0" fill="#fff" stroke="#8a8a8a" stroke-width="1"/><rect x="487.3" y="402.3" width="6" height="8.2" rx="1" fill="#d6d6d6" stroke="#8a8a8a" stroke-width="1"/><path d="M496 406.6h5.5" stroke="#777" stroke-width="1"/><rect x="489" y="414.8" width="30.5" height="8.3" rx="0" fill="#fff" stroke="#8a8a8a" stroke-width="1"/><rect x="487.3" y="414.3" width="6" height="8.2" rx="1" fill="#d6d6d6" stroke="#8a8a8a" stroke-width="1"/><path d="M496 418.6h5.5" stroke="#777" stroke-width="1"/><rect x="489" y="426.8" width="30.5" height="8.3" rx="0" fill="#fff" stroke="#8a8a8a" stroke-width="1"/><rect x="487.3" y="426.3" width="6" height="8.2" rx="1" fill="#d6d6d6" stroke="#8a8a8a" stroke-width="1"/><path d="M496 430.6h5.5" stroke="#777" stroke-width="1"/><rect x="541.2" y="401.3" width="47.4" height="11.5" rx="1.5" fill="#d6d6d6" stroke="#8a8a8a" stroke-width="1"/><rect x="542.9" y="402.90000000000003" width="8.2" height="8.2" rx="0" fill="#fff" stroke="#8a8a8a" stroke-width="1"/><path d="M553 402.5h5" stroke="#999" stroke-width="0.8"/><path d="M556 405.90000000000003h4" stroke="#777" stroke-width="1"/><path d="M556 409.1h4" stroke="#777" stroke-width="1"/><circle cx="553.6" cy="405.90000000000003" r="0.9" fill="#fff" stroke="#777" stroke-width="0.7"/><circle cx="553.6" cy="409.1" r="0.9" fill="#fff" stroke="#777" stroke-width="0.7"/><rect x="541.2" y="413.7" width="47.4" height="11.5" rx="1.5" fill="#d6d6d6" stroke="#8a8a8a" stroke-width="1"/><rect x="542.9" y="415.3" width="8.2" height="8.2" rx="0" fill="#fff" stroke="#8a8a8a" stroke-width="1"/><path d="M553 414.9h5" stroke="#999" stroke-width="0.8"/><path d="M556 418.3h4" stroke="#777" stroke-width="1"/><path d="M556 421.5h4" stroke="#777" stroke-width="1"/><circle cx="553.6" cy="418.3" r="0.9" fill="#fff" stroke="#777" stroke-width="0.7"/><circle cx="553.6" cy="421.5" r="0.9" fill="#fff" stroke="#777" stroke-width="0.7"/><rect x="541.2" y="426.1" width="47.4" height="11.5" rx="1.5" fill="#d6d6d6" stroke="#8a8a8a" stroke-width="1"/><rect x="542.9" y="427.70000000000005" width="8.2" height="8.2" rx="0" fill="#fff" stroke="#8a8a8a" stroke-width="1"/><path d="M553 427.3h5" stroke="#999" stroke-width="0.8"/><path d="M556 430.70000000000005h4" stroke="#777" stroke-width="1"/><path d="M556 433.90000000000003h4" stroke="#777" stroke-width="1"/><circle cx="553.6" cy="430.70000000000005" r="0.9" fill="#fff" stroke="#777" stroke-width="0.7"/><circle cx="553.6" cy="433.90000000000003" r="0.9" fill="#fff" stroke="#777" stroke-width="0.7"/><rect x="608.3" y="401.3" width="10.5" height="11" rx="0.5" fill="#d6d6d6" stroke="#8a8a8a" stroke-width="1"/><rect x="620.3" y="401.3" width="24.5" height="11" rx="0.5" fill="#d6d6d6" stroke="#8a8a8a" stroke-width="1"/><path d="M629.55 406.8h6" stroke="#777" stroke-width="1"/><rect x="608.3" y="414.3" width="24.5" height="11" rx="0.5" fill="#d6d6d6" stroke="#8a8a8a" stroke-width="1"/><path d="M617.55 419.8h6" stroke="#777" stroke-width="1"/><rect x="634.3" y="414.3" width="10.5" height="11" rx="0.5" fill="#d6d6d6" stroke="#8a8a8a" stroke-width="1"/><rect x="608.3" y="427" width="10.5" height="11.3" rx="0.5" fill="#d6d6d6" stroke="#8a8a8a" stroke-width="1"/><rect x="620.3" y="427" width="24.5" height="11.3" rx="0.5" fill="#d6d6d6" stroke="#8a8a8a" stroke-width="1"/><path d="M629.55 432.65h6" stroke="#777" stroke-width="1"/><path d="M668.5 188.5l3.5-3.5 3.5 3.5" fill="none" stroke="#555" stroke-width="1.2"/><path d="M668.5 434.5l3.5 3.5 3.5-3.5" fill="none" stroke="#555" stroke-width="1.2"/><path d="M300 189.5H309.3L312.6 192.9V196.2H300L303.4 192.9Z" fill="#e0e0e0" stroke="#505050" stroke-width="1"/><rect x="305" y="194.6" width="7.6" height="7" rx="0.5" fill="#fff" stroke="#505050" stroke-width="1"/><path d="M306.6 197h4.4 M306.6 199.3h4.4" fill="none" stroke="#505050" stroke-width="0.8"/><rect x="300.3" y="210.3" width="2.5" height="2.6" rx="0" fill="#fff" stroke="#505050" stroke-width="0.9"/><rect x="304.2" y="210.3" width="8.8" height="2.6" rx="0" fill="#d8d8d8" stroke="#505050" stroke-width="0.9"/><rect x="300.3" y="214.4" width="2.5" height="2.6" rx="0" fill="#fff" stroke="#505050" stroke-width="0.9"/><rect x="304.2" y="214.4" width="8.8" height="2.6" rx="0" fill="#d8d8d8" stroke="#505050" stroke-width="0.9"/><rect x="300.3" y="218.5" width="2.5" height="2.6" rx="0" fill="#fff" stroke="#505050" stroke-width="0.9"/><rect x="304.2" y="218.5" width="8.8" height="2.6" rx="0" fill="#d8d8d8" stroke="#505050" stroke-width="0.9"/><path d="M299.9 235.9l2.3-2.6 2.3 2.6-2.3 2.6z" fill="#fff" stroke="#505050" stroke-width="1.1"/><path d="M304.3 235.9l2.3-2.6 2.3 2.6-2.3 2.6z" fill="#fff" stroke="#505050" stroke-width="1.1"/><path d="M308.7 235.9l2.3-2.6 2.3 2.6-2.3 2.6z" fill="#fff" stroke="#505050" stroke-width="1.1"/><rect x="302.2" y="251.5" width="2.4" height="2.4" rx="0" fill="#fff" stroke="#505050" stroke-width="0.9"/><rect x="308.8" y="251.5" width="2.4" height="2.4" rx="0" fill="#fff" stroke="#505050" stroke-width="0.9"/><rect x="311.3" y="256.5" width="2.4" height="2.4" rx="0" fill="#fff" stroke="#505050" stroke-width="0.9"/><rect x="306.5" y="261.3" width="2.4" height="2.4" rx="0" fill="#fff" stroke="#505050" stroke-width="0.9"/><rect x="300.5" y="258.5" width="2.4" height="2.4" rx="0" fill="#fff" stroke="#505050" stroke-width="0.9"/><path d="M305 252.7h3.2 M312.3 254.2v2 M310.8 260l-1.5 1.8 M305.8 262.5l-3.2-1.6 M301.6 257.7v-3.2" fill="none" stroke="#505050" stroke-width="1"/><rect x="304.6" y="271.2" width="4.8" height="3.2" rx="0" fill="#fff" stroke="#505050" stroke-width="1"/><path d="M307 274.4v2.4 M301.5 279v-2.2h11v2.2 M307 276.8v2.2" fill="none" stroke="#505050" stroke-width="1"/><rect x="300.2" y="279.3" width="2.7" height="3.2" rx="0" fill="#fff" stroke="#505050" stroke-width="1"/><rect x="305.7" y="279.3" width="2.7" height="3.2" rx="0" fill="#fff" stroke="#505050" stroke-width="1"/><rect x="311.2" y="279.3" width="2.7" height="3.2" rx="0" fill="#fff" stroke="#505050" stroke-width="1"/><rect x="300.5" y="291.5" width="12.5" height="12.8" rx="0" fill="#e2e2e2" stroke="#505050" stroke-width="1"/><rect x="301" y="292" width="6" height="6" rx="0" fill="#fff" stroke="none" stroke-width="0"/><path d="M300.5 297.8h12.5 M303.6 296.8v-3.6 M302 294.7l1.6-1.6 1.6 1.6 M310 299v3.6 M308.4 301l1.6 1.6 1.6-1.6" fill="none" stroke="#505050" stroke-width="1"/><path d="M303.3 312.3h6.4v3h3v6.4h-3v3h-6.4v-3h-3v-6.4h3z" fill="#fff" stroke="#505050" stroke-width="1.1"/><path d="M306.5 313v11 M301 318.5h11" fill="none" stroke="#505050" stroke-width="1.1"/><path d="M306.7 332.2l6.2 12.8h-12.4z" fill="#e6e6e6" stroke="#505050" stroke-width="1.1"/><path d="M303.4 338.5h6.6 M301.9 341.6h9.6" fill="none" stroke="#505050" stroke-width="1.1"/><rect x="300.5" y="353.5" width="12.5" height="12.5" rx="0" fill="#fff" stroke="#505050" stroke-width="1"/><path d="M301.5 364.8l3.5-4 2.5 2.5 1.5-1.5 3.3 3z" fill="#666" stroke="none" stroke-width="0"/><circle cx="309.7" cy="356.8" r="1" fill="#666" stroke="none" stroke-width="0"/><path d="M864.3 151.6l8.6 8.6 M872.9 151.6l-8.6 8.6" fill="none" stroke="#222" stroke-width="1.1"/><text x="830" y="159.6" font-family="Liberation Sans" font-size="11" font-weight="400" fill="#222" text-anchor="middle">?</text></svg>
<div class="t s" style="left:18.5px;top:8.99px;font-size:11px;font-weight:400;color:#e9edf5;transform:scaleX(0.924)">Автосохранение</div><div class="t s" style="left:346.7px;top:8.99px;font-size:11px;font-weight:400;color:#e9edf5;transform:scaleX(0.918)">Как правильно офор...</div><div class="t s" style="left:611.8px;top:8.99px;font-size:11px;font-weight:400;color:#3d4f72;transform:scaleX(0.974)">Поиск</div><div class="t s" style="left:949.5px;top:8.99px;font-size:11px;font-weight:400;color:#e9edf5;transform:scaleX(0.938)">ИТ-2</div><div class="t s" style="left:13.3px;top:36.99px;font-size:11px;font-weight:400;color:#444;transform:scaleX(0.924)">Файл</div><div class="t s" style="left:65.6px;top:36.99px;font-size:11px;font-weight:400;color:#444;transform:scaleX(0.960)">Главная</div><div class="t s" style="left:197.7px;top:36.99px;font-size:11px;font-weight:400;color:#444;transform:scaleX(1.020)">Конструктор</div><div class="t s" style="left:288.3px;top:36.99px;font-size:11px;font-weight:400;color:#444;transform:scaleX(1.040)">Макет</div><div class="t s" style="left:346.0px;top:36.99px;font-size:11px;font-weight:400;color:#444;transform:scaleX(0.947)">Ссылки</div><div class="t s" style="left:411.5px;top:36.99px;font-size:11px;font-weight:400;color:#444;transform:scaleX(0.942)">Рассылки</div><div class="t s" style="left:486.7px;top:36.99px;font-size:11px;font-weight:400;color:#444;transform:scaleX(0.990)">Рецензирование</div><div class="t s" style="left:598.8px;top:36.99px;font-size:11px;font-weight:400;color:#444;transform:scaleX(0.894)">Вид</div><div class="t s" style="left:642.6px;top:36.99px;font-size:11px;font-weight:400;color:#444;transform:scaleX(0.982)">Справка</div><div class="t" style="left:131.3px;top:36.99px;font-size:11px;font-weight:700;color:#333;transform:scaleX(0.949)">Вставка</div><div class="t" style="left:1087.3px;top:36.57px;font-size:11.5px;font-weight:700;color:#2b579a;transform:scaleX(0.916)">Поделиться</div><div class="t s" style="left:7.0px;top:89.99px;font-size:11px;font-weight:400;color:#444;transform:scaleX(0.920)">Страницы</div><div class="t s" style="left:71.5px;top:90.99px;font-size:11px;font-weight:400;color:#444;transform:scaleX(0.892)">Таблица</div><div class="t s" style="left:128.5px;top:90.99px;font-size:11px;font-weight:400;color:#444;transform:scaleX(0.939)">Рисунки</div><div class="t s" style="left:529.5px;top:90.99px;font-size:11px;font-weight:400;color:#444;transform:scaleX(0.903)">Википедия</div><div class="t s" style="left:602.4px;top:90.99px;font-size:11px;font-weight:400;color:#444;transform:scaleX(0.886)">Видео из</div><div class="t s" style="left:597.7px;top:104.99px;font-size:11px;font-weight:400;color:#444;transform:scaleX(0.924)">Интернета</div><div class="t s" style="left:664.0px;top:89.99px;font-size:11px;font-weight:400;color:#444;transform:scaleX(0.929)">Ссылки</div><div class="t s" style="left:717.3px;top:90.99px;font-size:11px;font-weight:400;color:#444;transform:scaleX(0.950)">Примечание</div><div class="t s" style="left:942.0px;top:90.99px;font-size:11px;font-weight:400;color:#444;transform:scaleX(0.891)">Текстовое</div><div class="t s" style="left:949.0px;top:104.99px;font-size:11px;font-weight:400;color:#444;transform:scaleX(0.903)">поле</div><div class="t s" style="left:1068.4px;top:89.99px;font-size:11px;font-weight:400;color:#444;transform:scaleX(0.948)">Символы</div><div class="t s" style="left:189.6px;top:61.99px;font-size:11px;font-weight:400;color:#444;transform:scaleX(0.957)">Фигуры</div><div class="t s" style="left:189.6px;top:81.99px;font-size:11px;font-weight:400;color:#444;transform:scaleX(0.949)">Значки</div><div class="t s" style="left:190.0px;top:100.99px;font-size:11px;font-weight:400;color:#444;transform:scaleX(0.921)">Трехмерные модели</div><div class="t s" style="left:325.0px;top:61.99px;font-size:11px;font-weight:400;color:#444;transform:scaleX(0.922)">SmartArt</div><div class="t s" style="left:325.0px;top:81.99px;font-size:11px;font-weight:400;color:#444;transform:scaleX(0.944)">Диаграмма</div><div class="t s" style="left:325.0px;top:100.99px;font-size:11px;font-weight:400;color:#444;transform:scaleX(0.983)">Снимок</div><div class="t s" style="left:418.3px;top:69.99px;font-size:11px;font-weight:400;color:#444;transform:scaleX(0.937)">Получить надстройки</div><div class="t s" style="left:418.3px;top:97.99px;font-size:11px;font-weight:400;color:#444;transform:scaleX(0.944)">Мои надстройки</div><div class="t s" style="left:813.0px;top:61.99px;font-size:11px;font-weight:400;color:#444;transform:scaleX(0.933)">Верхний колонтитул</div><div class="t s" style="left:813.0px;top:81.99px;font-size:11px;font-weight:400;color:#444;transform:scaleX(0.956)">Нижний колонтитул</div><div class="t s" style="left:813.0px;top:100.99px;font-size:11px;font-weight:400;color:#444;transform:scaleX(0.937)">Номер страницы</div><div class="t s" style="left:70.0px;top:124.99px;font-size:11px;font-weight:400;color:#555;transform:scaleX(0.890)">Таблицы</div><div class="t s" style="left:225.0px;top:124.99px;font-size:11px;font-weight:400;color:#555;transform:scaleX(0.874)">Иллюстрации</div><div class="t s" style="left:462.8px;top:124.99px;font-size:11px;font-weight:400;color:#555;transform:scaleX(0.898)">Надстройки</div><div class="t s" style="left:592.0px;top:124.99px;font-size:11px;font-weight:400;color:#555;transform:scaleX(0.882)">Мультимедиа</div><div class="t s" style="left:718.0px;top:124.99px;font-size:11px;font-weight:400;color:#555;transform:scaleX(0.926)">Примечания</div><div class="t s" style="left:830.0px;top:124.99px;font-size:11px;font-weight:400;color:#555;transform:scaleX(0.875)">Колонтитулы</div><div class="t s" style="left:984.0px;top:124.99px;font-size:11px;font-weight:400;color:#555;transform:scaleX(0.852)">Текст</div><div class="t" style="left:288.7px;top:150.99px;font-size:11px;font-weight:400;color:#111;transform:scaleX(0.931)">Выбор рисунка SmartArt</div><div class="t" style="left:324.0px;top:190.41px;font-size:10.5px;font-weight:400;color:#1a1a1a;transform:scaleX(0.884)">Все</div><div class="t" style="left:324.0px;top:211.41px;font-size:10.5px;font-weight:400;color:#505050;transform:scaleX(0.973)">Список</div><div class="t" style="left:324.0px;top:231.41px;font-size:10.5px;font-weight:400;color:#505050;transform:scaleX(0.977)">Процесс</div><div class="t" style="left:324.0px;top:251.41px;font-size:10.5px;font-weight:400;color:#505050;transform:scaleX(0.980)">Цикл</div><div class="t" style="left:324.0px;top:272.41px;font-size:10.5px;font-weight:400;color:#505050;transform:scaleX(0.962)">Иерархия</div><div class="t" style="left:324.0px;top:292.41px;font-size:10.5px;font-weight:400;color:#505050;transform:scaleX(0.896)">Связь</div><div class="t" style="left:324.0px;top:313.41px;font-size:10.5px;font-weight:400;color:#505050;transform:scaleX(0.964)">Матрица</div><div class="t" style="left:324.0px;top:333.41px;font-size:10.5px;font-weight:400;color:#505050;transform:scaleX(0.957)">Пирамида</div><div class="t" style="left:324.0px;top:354.41px;font-size:10.5px;font-weight:400;color:#505050;transform:scaleX(0.995)">Рисунок</div><div class="t" style="left:412.0px;top:182.41px;font-size:10.5px;font-weight:700;color:#555;transform:scaleX(0.942)">Список</div><div class="t" style="left:693.2px;top:343.17px;font-size:9.6px;font-weight:700;color:#444;letter-spacing:-0.075px">Простой блочный список</div><div class="t" style="left:692.7px;top:360.51px;font-size:9.2px;font-weight:400;color:#444;letter-spacing:0.344px">Служит для отображения</div><div class="t" style="left:692.7px;top:371.51px;font-size:9.2px;font-weight:400;color:#444;letter-spacing:0.273px">непоследовательных или</div><div class="t" style="left:692.7px;top:382.51px;font-size:9.2px;font-weight:400;color:#444;letter-spacing:0.515px">сгруппированных блоков</div><div class="t" style="left:692.7px;top:394.51px;font-size:9.2px;font-weight:400;color:#444;letter-spacing:0.447px">информации. Позволяет сэкономить</div><div class="t" style="left:692.7px;top:405.51px;font-size:9.2px;font-weight:400;color:#444;letter-spacing:0.461px">пространство как по горизонтали, так</div><div class="t" style="left:692.7px;top:416.51px;font-size:9.2px;font-weight:400;color:#444;letter-spacing:0.410px">и по вертикали.</div><div class="t" style="left:772.7px;top:454.41px;font-size:10.5px;font-weight:400;color:#111;transform:scaleX(0.895)">ОК</div><div class="t" style="left:833.6px;top:454.41px;font-size:10.5px;font-weight:400;color:#111;transform:scaleX(0.918)">Отмена</div>
</body></html>
